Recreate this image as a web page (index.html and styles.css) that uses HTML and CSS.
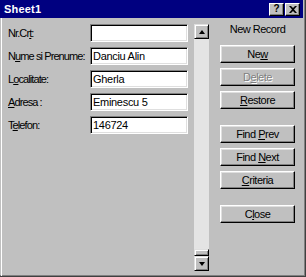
FILE: index.html
```html
<!DOCTYPE html>
<html lang="ro">
<head>
  <meta charset="UTF-8">
  <title>Sheet1</title>
  <link rel="stylesheet" href="styles.css">
</head>
<body>
  <div class="window">
    <div class="titlebar">
      <span class="title">Sheet1</span>
      <div class="caption-btns">
        <span class="cbtn help">?</span>
        <span class="cbtn close">
          <svg width="8" height="7" viewBox="0 0 8 7"><path d="M0 0h2l2 2 2-2h2L5 3.5 8 7H6L4 5 2 7H0l3-3.5z" fill="#000"/></svg>
        </span>
      </div>
    </div>

    <div class="body">
      <div class="form">
        <div class="row"><span class="label">Nr.Cr<u>t</u>:</span><div class="field"></div></div>
        <div class="row"><span class="label">N<u>u</u>me si Prenume:</span><div class="field">Danciu Alin</div></div>
        <div class="row"><span class="label">L<u>o</u>calitate:</span><div class="field">Gherla</div></div>
        <div class="row"><span class="label"><u>A</u>dresa :</span><div class="field">Eminescu 5</div></div>
        <div class="row"><span class="label">T<u>e</u>lefon:</span><div class="field">146724</div></div>
      </div>

      <div class="scrollbar">
        <div class="sb-btn"><span class="arrow up"></span></div>
        <div class="sb-track"></div>
        <div class="sb-thumb"></div>
        <div class="sb-btn"><span class="arrow down"></span></div>
      </div>

      <div class="actions">
        <div class="status">New Record</div>
        <div class="btn"><span>Ne<u>w</u></span></div>
        <div class="btn disabled"><span>D<u>e</u>lete</span></div>
        <div class="btn"><span><u>R</u>estore</span></div>
        <div class="btn spaced"><span>Find <u>P</u>rev</span></div>
        <div class="btn"><span>Find <u>N</u>ext</span></div>
        <div class="btn"><span><u>C</u>riteria</span></div>
        <div class="btn spaced"><span>C<u>l</u>ose</span></div>
      </div>
    </div>
  </div>
</body>
</html>
```

FILE: styles.css
```css
* { margin: 0; padding: 0; box-sizing: border-box; }
body {
  font-family: 'Liberation Sans', Arial, sans-serif;
  font-size: 11px;
  color: #000;
  background: #c0c0c0;
}
.window {
  width: 306px;
  height: 277px;
  background: #c0c0c0;
  border-right: 1px solid #404040;
  border-bottom: 1px solid #404040;
  box-shadow: inset -1px -1px #808080;
  display: flex;
  flex-direction: column;
}
.titlebar {
  height: 18px;
  margin-right: 2px;
  background: #000080;
  display: flex;
  align-items: center;
  justify-content: space-between;
  padding: 0 3px 0 4px;
}
.title {
  color: #fff;
  font-weight: 700;
  font-size: 11px;
  letter-spacing: 0.2px;
}
.caption-btns {
  display: flex;
  gap: 1px;
}
.cbtn {
  width: 15px;
  height: 13px;
  background: #c0c0c0;
  border: 1px solid;
  border-color: #fff #000 #000 #fff;
  box-shadow: inset -1px -1px #808080;
  display: flex;
  align-items: center;
  justify-content: center;
  font-weight: 700;
  font-size: 10px;
  line-height: 1;
}
.body {
  flex: 1;
  display: flex;
  margin-left: 1px;
  border-left: 1px solid #fff;
  padding-top: 6px;
}
.form {
  display: flex;
  flex-direction: column;
  gap: 5px;
  padding-left: 6px;
}
.row {
  display: flex;
  align-items: center;
  height: 18px;
}
.label {
  width: 82px;
  flex-shrink: 0;
  white-space: nowrap;
  letter-spacing: -0.9px;
}
.field {
  width: 98px;
  height: 18px;
  background: #fff;
  border: 1px solid;
  border-color: #808080 #fff #fff #808080;
  box-shadow: inset 1px 1px #000, inset -1px -1px #dfdfdf;
  padding: 2px 0 0 2px;
  letter-spacing: -0.3px;
  line-height: 13px;
  white-space: nowrap;
}
.scrollbar {
  width: 15px;
  margin-left: 6px;
  margin-bottom: 5px;
  display: flex;
  flex-direction: column;
}
.sb-btn, .sb-thumb {
  background: #c0c0c0;
  border: 1px solid;
  border-color: #dfdfdf #000 #000 #dfdfdf;
  box-shadow: inset 1px 1px #fff, inset -1px -1px #808080;
}
.sb-btn {
  height: 15px;
  display: flex;
  align-items: center;
  justify-content: center;
}
.sb-thumb {
  height: 7px;
}
.sb-track {
  flex: 1;
  background: #e4e4e4;
}
.arrow {
  width: 0;
  height: 0;
  border-left: 3.5px solid transparent;
  border-right: 3.5px solid transparent;
}
.arrow.up { border-bottom: 4px solid #000; }
.arrow.down { border-top: 4px solid #000; }
.actions {
  width: 75px;
  margin-left: 11px;
  display: flex;
  flex-direction: column;
  gap: 5px;
}
.status {
  text-align: center;
  height: 16px;
  line-height: 11px;
  letter-spacing: -0.5px;
}
.btn {
  height: 18px;
  background: #c0c0c0;
  border: 1px solid;
  border-color: #fff #000 #000 #fff;
  box-shadow: inset -1px -1px #808080, inset 1px 1px #dfdfdf;
  display: flex;
  align-items: center;
  justify-content: center;
  letter-spacing: -0.5px;
  white-space: nowrap;
}
.btn.spaced {
  margin-top: 11px;
}
.btn.disabled {
  color: #808080;
  text-shadow: 1px 1px #fff;
}
u {
  text-decoration: underline;
  text-underline-offset: 1px;
}
```
